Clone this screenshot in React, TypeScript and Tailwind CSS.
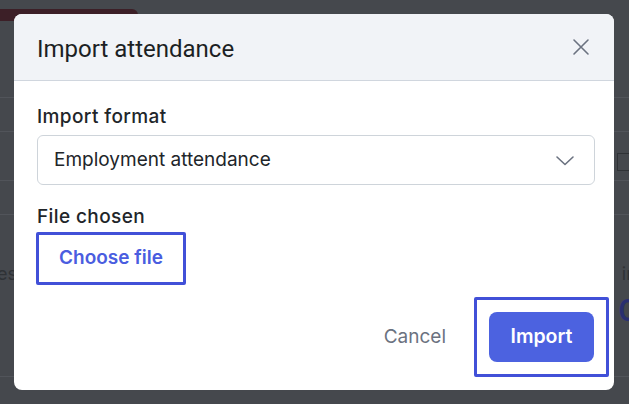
import React from "react";

function CloseIcon() {
  return (
    <svg width="18" height="18" viewBox="0 0 18 18" fill="none" stroke="#6b7280" strokeWidth="1.6" strokeLinecap="round">
      <path d="M2 2L16 16M16 2L2 16" />
    </svg>
  );
}

function Chevron() {
  return (
    <svg width="20" height="11" viewBox="0 0 20 11" fill="none" stroke="#6b7280" strokeWidth="1.6" strokeLinecap="round" strokeLinejoin="round">
      <path d="M2 2L10 9.5L18 2" />
    </svg>
  );
}

export default function App() {
  return (
    <div className="relative h-[404px] w-full overflow-hidden bg-[#45484d] font-['Inter','Noto_Sans',sans-serif]">
      {/* dimmed page behind */}
      <div className="flex flex-col">
        <div className="h-[9px]" />
        <div className="h-[12px] w-[138px] rounded-tr-[6px] bg-[#3c1f27]" />
        <div className="h-[77px] border-b border-[#51545a]" />
        <div className="h-[34px] border-b border-[#51545a]" />
        <div className="flex h-[49px] justify-end border-b border-[#51545a]">
          <div className="mt-[21px] h-[18px] w-[12px] border border-r-0 border-[#2f3236]" />
        </div>
        <div className="h-[34px] border-b border-[#51545a]" />
        <div className="flex h-[162px] items-start justify-between border-b border-[#51545a] pt-[45px] text-[18px] text-[#2f3236]">
          <span className="-ml-[3px]">es</span>
          <div className="flex flex-col items-end">
            <span className="-mr-[4px]">ir</span>
            <span className="mt-[6px] -mr-[9px] text-[30px] font-semibold leading-[34px] text-[#2a3070]">0</span>
          </div>
        </div>
      </div>

      {/* modal */}
      <div className="absolute inset-0 pl-[14px] pt-[14px]">
        <div className="flex h-[376px] w-[600px] flex-col overflow-hidden rounded-[8px] bg-white">
          <div className="flex h-[67px] shrink-0 items-center justify-between border-b border-[#d0d6de] bg-[#f1f3f7] pl-[23px] pr-[24px]">
            <h2 className="mt-[3px] font-['Roboto',sans-serif] text-[24px] font-normal text-[#1c1f24]">Import attendance</h2>
            <CloseIcon />
          </div>
          <div className="flex flex-col pl-[23px] pr-[19px] pt-[26px]">
            <label className="text-[19px] font-medium leading-[20px] tracking-[0.4px] text-[#212529]">Import format</label>
            <div className="mt-[8px] flex h-[50px] items-center justify-between rounded-[6px] border border-[#ced4da] pl-[16px] pr-[19px]">
              <span className="text-[19px] text-[#212529]">Employment attendance</span>
              <Chevron />
            </div>
            <label className="mt-[22px] text-[19px] font-medium leading-[20px] tracking-[0.4px] text-[#212529]">File chosen</label>
            <div className="-ml-[1px] mt-[5px] flex">
              <button className="flex h-[53px] w-[150px] items-center justify-center rounded-[2px] border-[3px] border-[#4150d8] bg-white text-[19px] font-semibold text-[#4a5de0]">
                Choose file
              </button>
            </div>
          </div>
          <div className="flex items-center justify-end pr-[5px] pt-[12px]">
            <span className="mr-[28px] text-[19px] text-[#6b7280]">Cancel</span>
            <div className="flex h-[80px] w-[135px] items-center justify-center rounded-[2px] border-[3px] border-[#4150d8]">
              <button className="h-[50px] w-[105px] rounded-[8px] bg-[#4c62e0] text-[19.5px] font-semibold text-white">Import</button>
            </div>
          </div>
        </div>
      </div>
    </div>
  );
}
